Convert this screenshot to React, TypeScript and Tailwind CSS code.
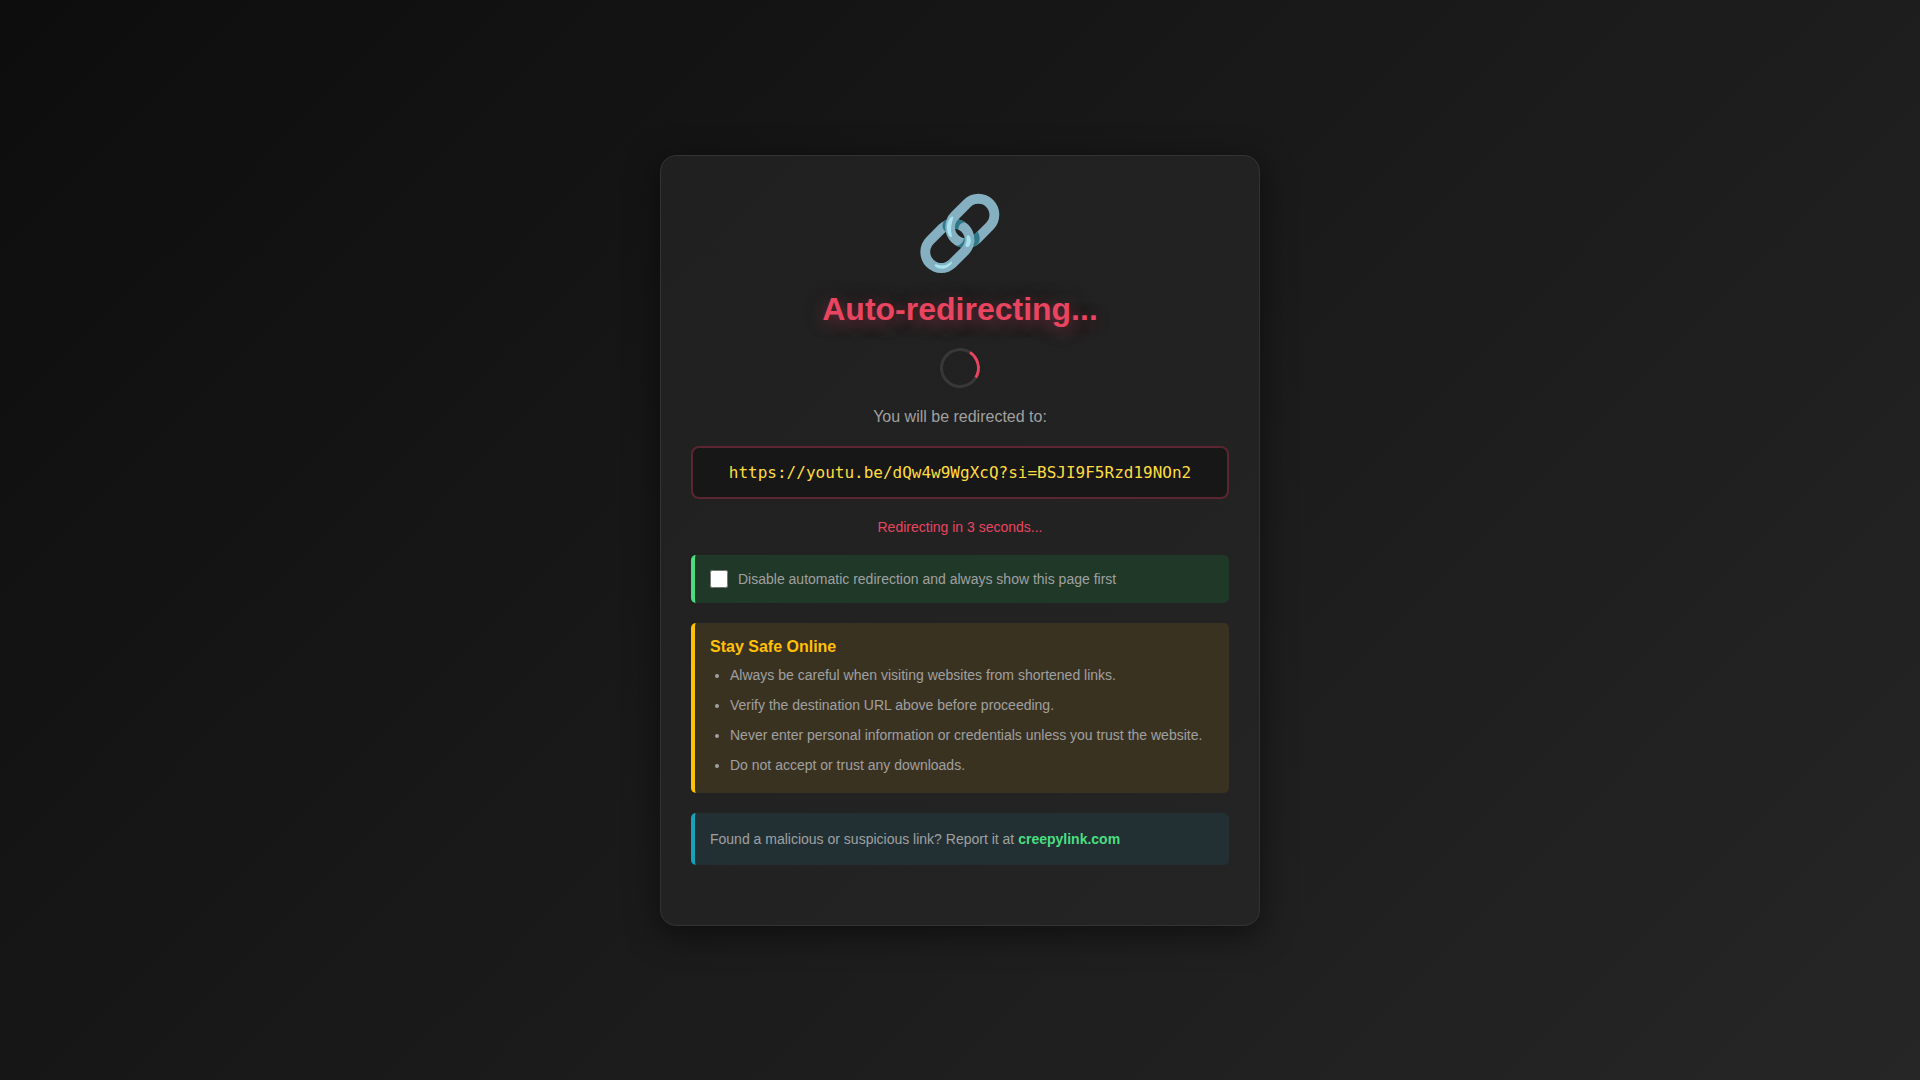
import React from 'react'

const tips = [
  'Always be careful when visiting websites from shortened links.',
  'Verify the destination URL above before proceeding.',
  'Never enter personal information or credentials unless you trust the website.',
  'Do not accept or trust any downloads.',
]

const App = () => {
  return (
    <div className="min-h-screen flex items-center justify-center p-5 bg-[linear-gradient(135deg,#0d0d0d_0%,#1a1a1a_50%,#262626_100%)] font-['Liberation_Sans',Arial,sans-serif] text-[#a0a0a0]">
      <main className="w-full max-w-[600px] rounded-2xl border border-[#333333] bg-[linear-gradient(135deg,#202020,#242424)] px-[30px] pt-[30px] pb-[60px] text-center shadow-[0_8px_32px_rgba(0,0,0,0.5)]">
        <div className="h-[94px] text-[72px] leading-[94px]" aria-hidden="true">🔗</div>

        <h1 className="mt-[9px] text-[32px] leading-10 font-bold text-[#e94560] [text-shadow:0_4px_16px_rgba(233,69,96,0.45),0_0_24px_rgba(0,0,0,0.3)]">
          Auto-redirecting...
        </h1>

        <div className="mt-[19px] mx-auto size-10 rounded-full border-3 border-[#383838] border-t-[#e94560] rotate-[77deg]"></div>

        <p className="mt-[17px] text-base leading-6">You will be redirected to:</p>

        <div className="mt-[17px] rounded-lg border-2 border-[#5b2531] bg-[#171717] px-4 py-3 font-['DejaVu_Sans_Mono',monospace] text-base leading-[25px] text-[#ffdd40] break-all">
          https://youtu.be/dQw4w9WgXcQ?si=BSJI9F5Rzd19NOn2
        </div>

        <p className="mt-[18px] text-sm text-[#e94560]">Redirecting in 3 seconds...</p>

        <div className="mt-[18px] rounded-[5px] border-l-4 border-[#4ade80] bg-[#203828] px-[15px] py-[14px] text-left">
          <label htmlFor="disable-redirect" className="flex items-center gap-[10px] text-sm cursor-pointer">
            <input id="disable-redirect" type="checkbox" className="size-[18px] shrink-0" />
            Disable automatic redirection and always show this page first
          </label>
        </div>

        <div className="mt-5 rounded-[5px] border-l-4 border-[#ffc107] bg-[#3a3221] px-[15px] pt-3 pb-[17px] text-left">
          <h2 className="text-base leading-6 font-bold text-[#ffc107]">Stay Safe Online</h2>
          <ul className="mt-[5px] pl-5 list-disc flex flex-col gap-2 text-sm leading-[22px]">
            {tips.map((tip) => (
              <li key={tip}>{tip}</li>
            ))}
          </ul>
        </div>

        <div className="mt-5 rounded-[5px] border-l-4 border-[#17a2b8] bg-[#223034] px-[15px] py-4 text-left text-sm">
          Found a malicious or suspicious link? Report it at{' '}
          <a href="#" className="font-bold text-[#4ade80]">creepylink.com</a>
        </div>
      </main>
    </div>
  )
}

export default App
